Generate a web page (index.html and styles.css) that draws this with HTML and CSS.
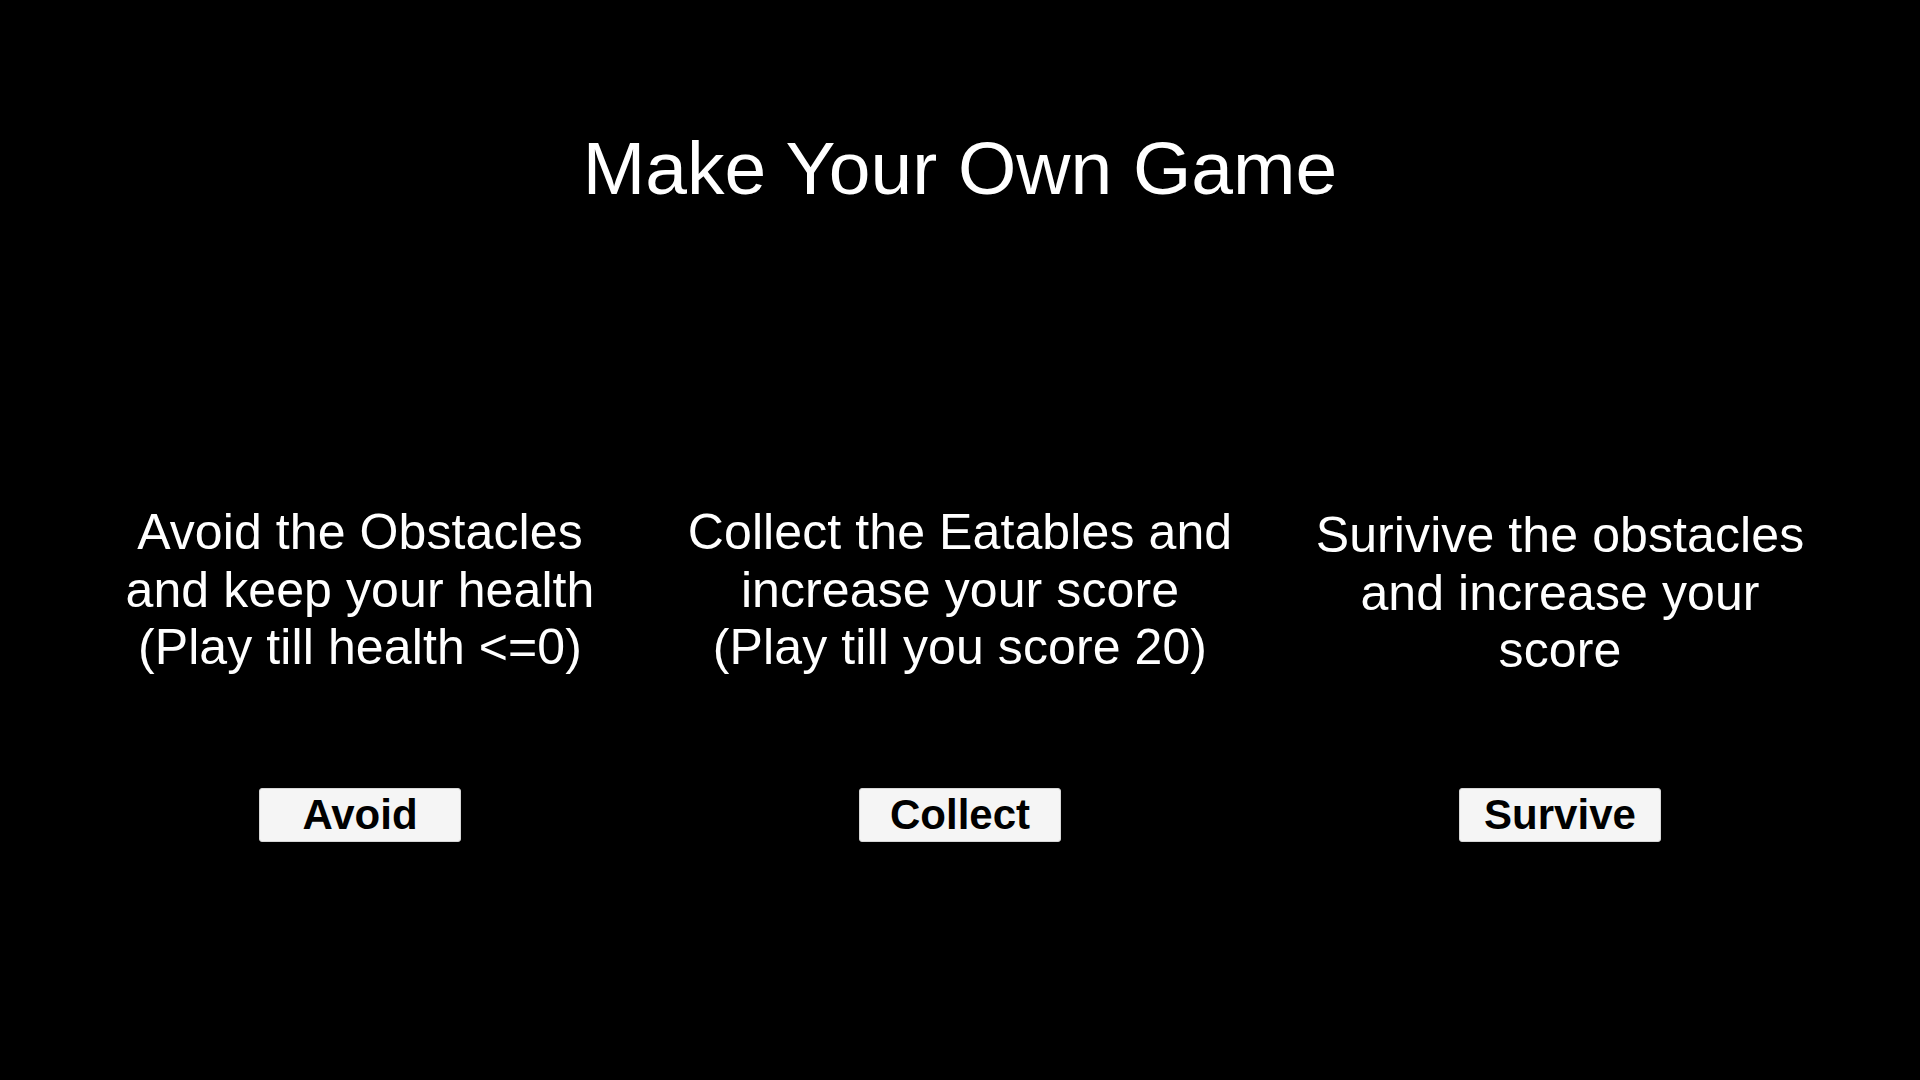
FILE: index.html
```html
<!DOCTYPE html>
<html lang="en">
<head>
<meta charset="utf-8">
<title>Make Your Own Game</title>
<link rel="stylesheet" href="styles.css">
</head>
<body>
<main class="screen">
  <h1 class="title">Make Your Own Game</h1>
  <section class="modes">
    <div class="mode">
      <p class="desc">Avoid the Obstacles<br>and keep your health<br>(Play till health &lt;=0)</p>
      <button class="btn" type="button">Avoid</button>
    </div>
    <div class="mode">
      <p class="desc">Collect the Eatables and<br>increase your score<br>(Play till you score 20)</p>
      <button class="btn" type="button">Collect</button>
    </div>
    <div class="mode">
      <p class="desc desc-low">Surivive the obstacles<br>and increase your<br>score</p>
      <button class="btn" type="button">Survive</button>
    </div>
  </section>
</main>
</body>
</html>
```

FILE: styles.css
```css
html, body {
  margin: 0;
  padding: 0;
  background: #000;
}

.screen {
  width: 1920px;
  height: 1080px;
  background: #000;
  color: #fff;
  font-family: "Liberation Sans", Arial, sans-serif;
  display: flex;
  flex-direction: column;
  align-items: stretch;
}

.title {
  margin: 0;
  padding-top: 125px;
  height: 86px;
  font-size: 75px;
  font-weight: 400;
  line-height: 86px;
  text-align: center;
  white-space: nowrap;
}

.modes {
  display: grid;
  grid-template-columns: repeat(3, 600px);
  padding: 0 60px;
  margin-top: 293px;
}

.mode {
  display: flex;
  flex-direction: column;
  align-items: center;
}

.desc {
  margin: 0;
  box-sizing: border-box;
  height: 173px;
  font-size: 50px;
  line-height: 57.5px;
  letter-spacing: 0.1px;
  text-align: center;
  white-space: nowrap;
}

.desc-low {
  padding-top: 3px;
}

.btn {
  margin-top: 111px;
  box-sizing: border-box;
  width: 202px;
  height: 54px;
  padding: 0;
  background: #f5f5f5;
  border: 1px solid #d6d6d6;
  border-radius: 3px;
  color: #000;
  font-family: "Liberation Sans", Arial, sans-serif;
  font-size: 42px;
  font-weight: 700;
  line-height: 52px;
  text-align: center;
  cursor: pointer;
}
```
